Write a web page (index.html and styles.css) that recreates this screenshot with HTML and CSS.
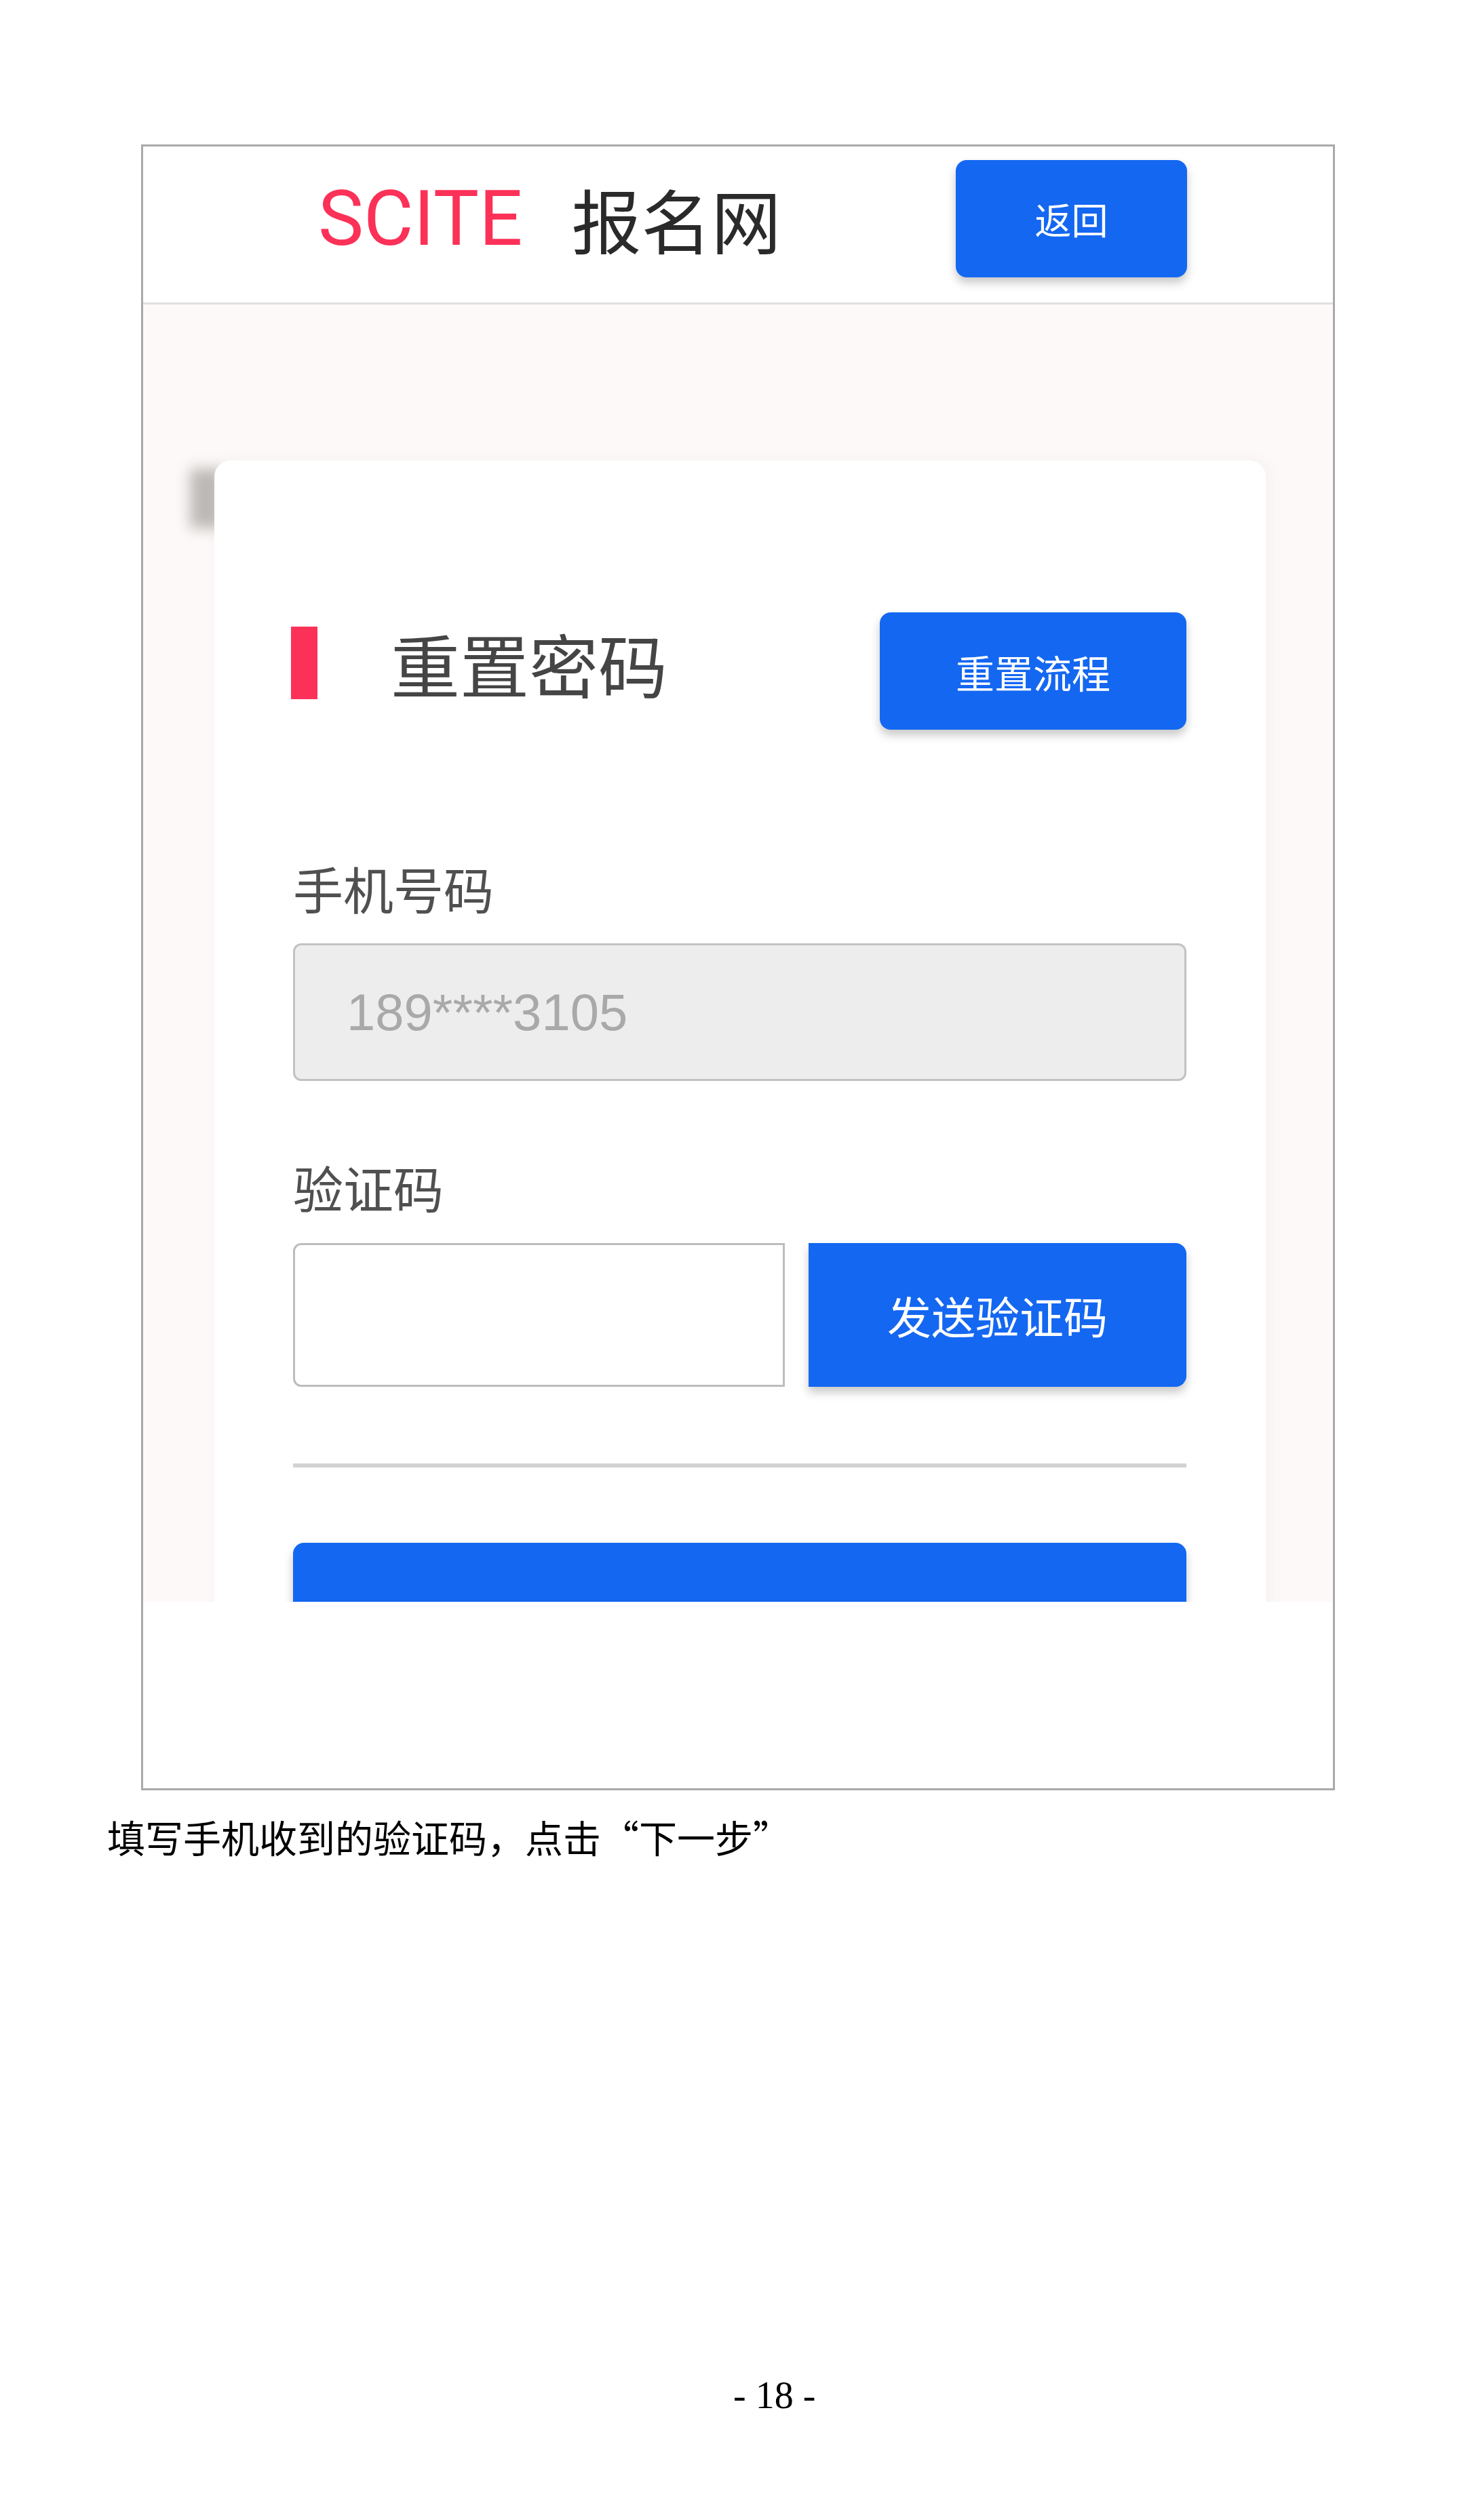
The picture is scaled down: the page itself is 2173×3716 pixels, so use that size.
FILE: index.html
```html
<!DOCTYPE html>
<html lang="zh-CN">
<head>
<meta charset="utf-8">
<title>重置密码</title>
<link rel="stylesheet" href="styles.css">
</head>
<body>
<div class="page">
  <div class="frame">
    <header class="header">
      <span class="logo-en">SCITE</span>
      <span class="logo-cn">报名网</span>
      <button class="btn btn-back">返回</button>
    </header>
    <main class="content">
      <section class="card">
        <div class="title-row">
          <div class="title-left">
            <span class="title-bar"></span>
            <h1 class="title">重置密码</h1>
          </div>
          <button class="btn btn-flow">重置流程</button>
        </div>
        <label class="field-label label-phone">手机号码</label>
        <div class="input input-phone">189****3105</div>
        <label class="field-label label-code">验证码</label>
        <div class="code-row">
          <div class="input input-code"></div>
          <button class="btn btn-send">发送验证码</button>
        </div>
        <div class="divider"></div>
        <button class="btn btn-next"></button>
      </section>
    </main>
  </div>
  <p class="caption">填写手机收到的验证码，点击“下一步”</p>
  <p class="page-num">- 18 -</p>
</div>
</body>
</html>
```
FILE: styles.css
```css
* { box-sizing: border-box; }
html, body { margin: 0; padding: 0; background: #ffffff; }
body { font-family: "Noto Sans CJK SC", "Noto Sans", sans-serif; }

.page { padding-top: 213px; width: 2173px; height: 3716px; overflow: hidden; }

.frame {
  margin-left: 208px;
  width: 1760px;
  height: 2427px;
  border: 3px solid #a9a9a9;
  background: #ffffff;
  display: flex;
  flex-direction: column;
}

.header {
  height: 233px;
  flex: 0 0 233px;
  border-bottom: 3px solid #e0e0e0;
  display: flex;
  align-items: center;
  padding-left: 258px;
  padding-bottom: 18px;
}
.logo-en {
  font-family: Roboto, "Liberation Sans", sans-serif;
  font-size: 113px;
  line-height: 1;
  color: #fb3158;
}
.logo-cn {
  font-family: "Noto Sans CJK SC", sans-serif;
  font-size: 103px;
  line-height: 1;
  color: #2a2a2a;
  margin-left: 72px;
}

.btn {
  border: none;
  background: #1467f1;
  color: #ffffff;
  font-family: "Noto Sans CJK SC", sans-serif;
  padding: 0;
  box-shadow: 0 8px 14px rgba(0, 0, 0, 0.22);
}
.btn-back {
  margin-left: auto;
  margin-right: 215px;
  width: 341px;
  height: 173px;
  border-radius: 16px;
  font-size: 54px;
}

.content {
  flex: 0 0 1913px;
  height: 1913px;
  background: #fcf9f8;
  overflow: hidden;
  padding-top: 230px;
  padding-left: 105px;
  position: relative;
  z-index: 0;
}

.card {
  position: relative;
  width: 1550px;
  min-height: 1800px;
  background: #ffffff;
  border-radius: 24px 24px 0 0;
  padding: 0 117px 0 116px;
  box-shadow: 6px 0 24px rgba(120, 100, 100, 0.05);
}
.card::before {
  content: "";
  position: absolute;
  z-index: -1;
  left: -36px;
  top: 12px;
  width: 48px;
  height: 88px;
  background: #bdb9b7;
  filter: blur(10px);
}

.title-row {
  display: flex;
  justify-content: space-between;
  align-items: flex-start;
  padding-top: 224px;
}
.title-left {
  display: flex;
  align-items: center;
  margin-top: 21px;
}
.title-bar {
  display: block;
  width: 39px;
  height: 107px;
  margin-left: -3px;
  background: #fb3158;
}
.title {
  margin: 0 0 0 108px;
  font-size: 102px;
  line-height: 107px;
  font-weight: 400;
  color: #454545;
}
.btn-flow {
  width: 452px;
  height: 173px;
  border-radius: 16px;
  font-size: 57px;
}

.field-label {
  display: block;
  font-size: 74px;
  line-height: 74px;
  color: #505050;
}
.label-phone { margin-top: 196px; }
.label-code { margin-top: 119px; }

.input {
  border: 3px solid #c2c2c2;
  border-radius: 12px;
}
.input-phone {
  margin-top: 45px;
  height: 203px;
  background: #ededed;
  font-family: "Liberation Sans", Arial, sans-serif;
  font-size: 76px;
  color: #a9a9a9;
  display: flex;
  align-items: center;
  padding-left: 76px;
}

.code-row {
  margin-top: 46px;
  display: flex;
  gap: 35px;
  height: 212px;
}
.input-code {
  width: 725px;
  height: 212px;
  background: #ffffff;
  border-color: #bdbdbd;
  border-radius: 12px 0 0 12px;
}
.btn-send {
  flex: 1;
  height: 212px;
  border-radius: 0 16px 16px 0;
  font-size: 65px;
}

.divider {
  margin-top: 113px;
  height: 6px;
  background: #d3d3d3;
}

.btn-next {
  position: relative;
  display: block;
  margin-top: 111px;
  width: 100%;
  height: 200px;
  border-radius: 16px;
}

.caption {
  margin: 40px 0 0 158px;
  font-size: 56px;
  line-height: 56px;
  color: #000000;
}

.page-num {
  margin: 768px 0 0 1081px;
  font-family: "Liberation Serif", "Times New Roman", serif;
  font-size: 56px;
  line-height: 56px;
  color: #000000;
}
```
